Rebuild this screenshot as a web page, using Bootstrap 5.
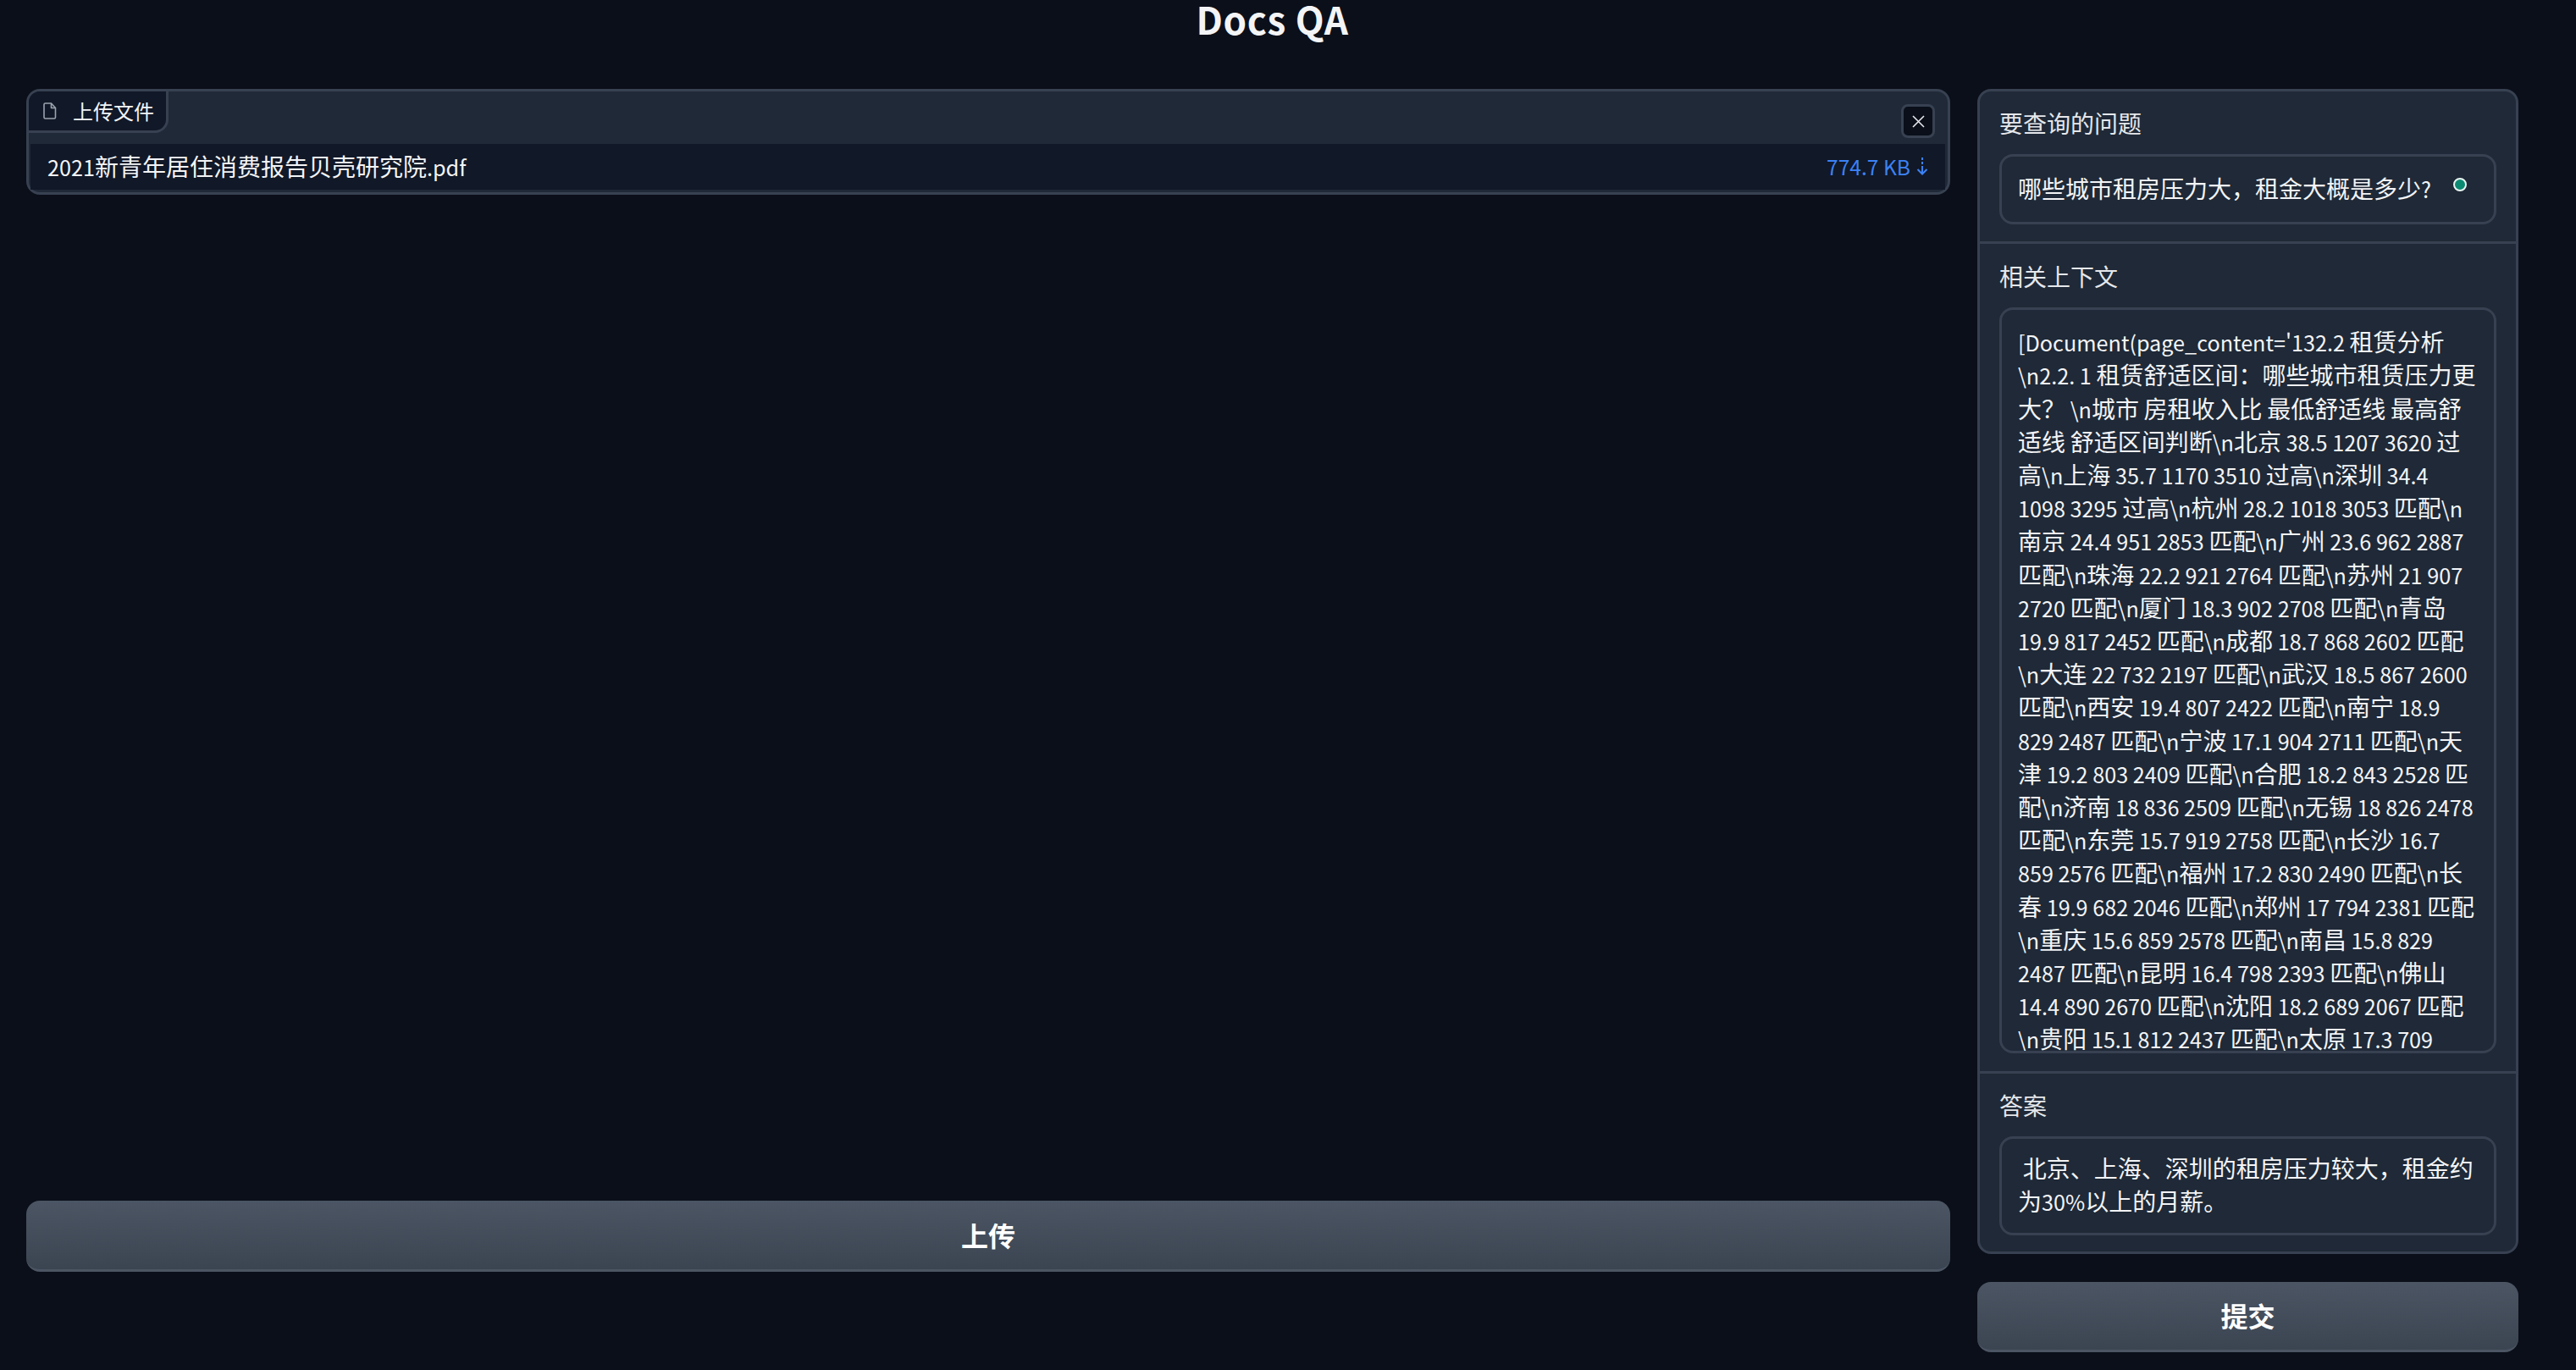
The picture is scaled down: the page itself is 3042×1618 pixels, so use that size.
<!DOCTYPE html>
<html lang="zh">
<head>
<meta charset="utf-8">
<title>Docs QA</title>
<link href="https://cdn.jsdelivr.net/npm/bootstrap@5.3.0/dist/css/bootstrap.min.css" rel="stylesheet">
<style>
html,body{height:100%}
body{background:#0b0f19;color:#f3f4f6;font-family:"Noto Sans CJK SC","Noto Sans",sans-serif;font-size:28px;line-height:39.2px;overflow:hidden}
.lt{font-size:25.2px;line-height:1}
.page-wrap{width:3042px;height:1618px;padding:0 68px 21px 31px}
.doc-title{font-size:44px;line-height:44px;font-weight:600;letter-spacing:.65px;margin:0;height:105px;text-align:center}
.main-cols{gap:32px;height:1492px}
.left-col{width:2272px}
.right-col{width:639px}
.upload-box{height:125px;border:3px solid #374151;border-radius:16px;background:#1f2937;position:relative;padding-left:2px;padding-right:3px}
.tab-head{width:165px;height:49px;margin-left:-2px;background:#111827;border-right:3px solid #374151;border-bottom:3px solid #374151;border-radius:13px 0 16px 0;font-size:24px;line-height:34px;padding-left:17px;gap:19px}
.close-btn{position:absolute;right:15px;top:15px;width:40px;height:40px;background:#0b0f19;border:3px solid #374151;border-radius:8px;padding:0}
.file-row{margin-top:13px;height:54px;background:#111827;padding:0 20px}
.file-size{color:#3b82f6;font-size:24.6px;gap:7px}
.wide-btn{border:0;border-bottom:3px solid #4b5563;border-radius:16px;color:#fff;font-size:32px;font-weight:700;background:linear-gradient(180deg,#4b5563,#3b4552)}
.up-btn{height:84px;width:100%;margin-bottom:95px}
.sub-btn{height:83px;width:100%;margin-top:33px}
.qa-panel{background:#1f2937;border:3px solid #374151;border-radius:16px;height:1376px}
.qa-sec{padding:18px 23px 0}
.sec-a{height:180px;border-bottom:3px solid #374151}
.sec-b{height:980px;border-bottom:3px solid #374151;padding-top:19px}
.sec-label{font-size:28px;line-height:39.2px;color:#e5e7eb;margin-bottom:17px}
.text-field{border:3px solid #374151;border-radius:16px;padding:19px 19px 0;overflow:hidden;position:relative}
.field-q{height:83px;padding-top:18px;padding-right:0;white-space:nowrap}
.field-ctx{height:881px;padding-top:18px}
.field-ans{height:117px;padding-top:15px}
.status-dot{position:absolute;right:32px;top:25px;width:16px;height:16px;border-radius:50%;background:#0b8a72;border:2px solid #e8f5f2}
</style>
</head>
<body>
<div class="page-wrap">
  <h1 class="doc-title">Docs QA</h1>
  <div class="main-cols d-flex align-items-stretch">
    <div class="left-col d-flex flex-column justify-content-between">
      <div class="upload-box">
        <div class="tab-head d-flex align-items-center">
          <svg width="16" height="20" viewBox="0 0 16 20" fill="none" stroke="#9ca3af" stroke-width="1.6" stroke-linejoin="round"><path d="M2.5 1h7l5 5.5v11a1.500 1.500 0 0 1-1.500 1.500h-10.500a1.500 1.500 0 0 1-1.500-1.500v-15a1.500 1.500 0 0 1 1.500-1.500z"/><path d="M9.500 1v5.500h5"/></svg>
          <span>上传文件</span>
        </div>
        <button class="close-btn d-flex align-items-center justify-content-center" type="button" aria-label="关闭">
          <svg width="15" height="15" viewBox="0 0 15 15" stroke="#e5e7eb" stroke-width="1.6"><path d="M1 1l13 13M14 1L1 14"/></svg>
        </button>
        <div class="file-row d-flex justify-content-between align-items-center">
          <span><span class="lt">2021</span>新青年居住消费报告贝壳研究院<span class="lt">.pdf</span></span>
          <span class="file-size d-flex align-items-center"><span>774.7 KB</span>
            <svg width="14" height="21" viewBox="0 0 14 21" fill="none" stroke="#3b82f6" stroke-width="2"><path d="M7 0v3M7 5v3M7 10v9.500M1.500 14l5.500 5.500 5.500-5.500"/></svg>
          </span>
        </div>
      </div>
      <button class="wide-btn up-btn" type="button">上传</button>
    </div>
    <div class="right-col d-flex flex-column">
      <div class="qa-panel">
        <div class="qa-sec sec-a">
          <div class="sec-label">要查询的问题</div>
          <div class="text-field field-q">哪些城市租房压力大，租金大概是多少<span class="lt">?</span><span class="status-dot"></span></div>
        </div>
        <div class="qa-sec sec-b">
          <div class="sec-label">相关上下文</div>
          <div class="text-field field-ctx"><span class="lt">[Document(page_content='132.2 </span>租赁分析<span class="lt">\n2.2. 1 </span>租赁舒适区间：哪些城市租赁压力更大？<span class="lt"> \n</span>城市<span class="lt"> </span>房租收入比<span class="lt"> </span>最低舒适线<span class="lt"> </span>最高舒适线<span class="lt"> </span>舒适区间判断<span class="lt">\n</span>北京<span class="lt"> 38.5 1207 3620 </span>过高<span class="lt">\n</span>上海<span class="lt"> 35.7 1170 3510 </span>过高<span class="lt">\n</span>深圳<span class="lt"> 34.4 1098 3295 </span>过高<span class="lt">\n</span>杭州<span class="lt"> 28.2 1018 3053 </span>匹配<span class="lt">\n</span>南京<span class="lt"> 24.4 951 2853 </span>匹配<span class="lt">\n</span>广州<span class="lt"> 23.6 962 2887 </span>匹配<span class="lt">\n</span>珠海<span class="lt"> 22.2 921 2764 </span>匹配<span class="lt">\n</span>苏州<span class="lt"> 21 907 2720 </span>匹配<span class="lt">\n</span>厦门<span class="lt"> 18.3 902 2708 </span>匹配<span class="lt">\n</span>青岛<span class="lt"> 19.9 817 2452 </span>匹配<span class="lt">\n</span>成都<span class="lt"> 18.7 868 2602 </span>匹配<span class="lt">\n</span>大连<span class="lt"> 22 732 2197 </span>匹配<span class="lt">\n</span>武汉<span class="lt"> 18.5 867 2600 </span>匹配<span class="lt">\n</span>西安<span class="lt"> 19.4 807 2422 </span>匹配<span class="lt">\n</span>南宁<span class="lt"> 18.9 829 2487 </span>匹配<span class="lt">\n</span>宁波<span class="lt"> 17.1 904 2711 </span>匹配<span class="lt">\n</span>天津<span class="lt"> 19.2 803 2409 </span>匹配<span class="lt">\n</span>合肥<span class="lt"> 18.2 843 2528 </span>匹配<span class="lt">\n</span>济南<span class="lt"> 18 836 2509 </span>匹配<span class="lt">\n</span>无锡<span class="lt"> 18 826 2478 </span>匹配<span class="lt">\n</span>东莞<span class="lt"> 15.7 919 2758 </span>匹配<span class="lt">\n</span>长沙<span class="lt"> 16.7 859 2576 </span>匹配<span class="lt">\n</span>福州<span class="lt"> 17.2 830 2490 </span>匹配<span class="lt">\n</span>长春<span class="lt"> 19.9 682 2046 </span>匹配<span class="lt">\n</span>郑州<span class="lt"> 17 794 2381 </span>匹配<span class="lt">\n</span>重庆<span class="lt"> 15.6 859 2578 </span>匹配<span class="lt">\n</span>南昌<span class="lt"> 15.8 829 2487 </span>匹配<span class="lt">\n</span>昆明<span class="lt"> 16.4 798 2393 </span>匹配<span class="lt">\n</span>佛山<span class="lt"> 14.4 890 2670 </span>匹配<span class="lt">\n</span>沈阳<span class="lt"> 18.2 689 2067 </span>匹配<span class="lt">\n</span>贵阳<span class="lt"> 15.1 812 2437 </span>匹配<span class="lt">\n</span>太原<span class="lt"> 17.3 709</span></div>
        </div>
        <div class="qa-sec sec-c">
          <div class="sec-label">答案</div>
          <div class="text-field field-ans"><span class="lt">&nbsp;</span>北京、上海、深圳的租房压力较大，租金约为<span class="lt">30%</span>以上的月薪。</div>
        </div>
      </div>
      <button class="wide-btn sub-btn" type="button">提交</button>
    </div>
  </div>
</div>
<script src="https://cdn.jsdelivr.net/npm/bootstrap@5.3.0/dist/js/bootstrap.bundle.min.js"></script>
</body>
</html>
